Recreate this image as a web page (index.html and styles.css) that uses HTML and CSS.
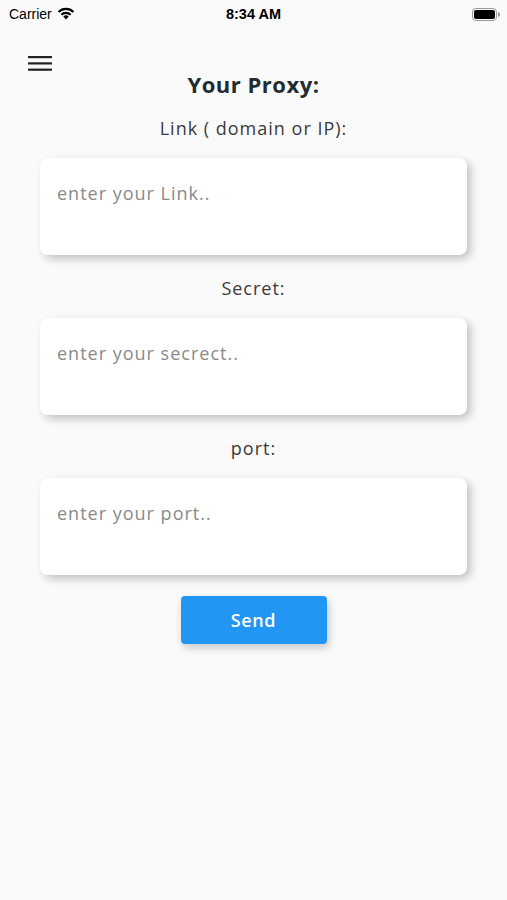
FILE: index.html
```html
<!DOCTYPE html>
<html>
<head>
<meta charset="utf-8">
<link rel="stylesheet" href="styles.css">
</head>
<body>
<div class="screen">
  <div class="statusbar">
    <div class="sb-left">
      <span class="carrier">Carrier</span>
      <svg class="wifi" width="18" height="13" viewBox="0 0 18 13">
        <path d="M9 12.5 L6.3 9.6 A3.9 3.9 0 0 1 11.7 9.6 Z" fill="#000"/>
        <path d="M3.6 7 A7.6 7.6 0 0 1 14.4 7 L12.9 8.5 A5.5 5.5 0 0 0 5.1 8.5 Z" fill="#000"/>
        <path d="M0.8 4.2 A11.6 11.6 0 0 1 17.2 4.2 L15.7 5.7 A9.5 9.5 0 0 0 2.3 5.7 Z" fill="#000"/>
      </svg>
    </div>
    <div class="time">8:34 AM</div>
    <div class="sb-right">
      <svg width="28" height="13" viewBox="0 0 28 13">
        <rect x="0.5" y="0.5" width="24" height="12" rx="3.5" fill="none" stroke="#9a9a9a"/>
        <rect x="2" y="2" width="21" height="9" rx="2" fill="#000"/>
        <path d="M26 4.3 A2 2 0 0 1 26 8.7 Z" fill="#9a9a9a"/>
      </svg>
    </div>
  </div>
  <div class="topbar">
    <svg class="menu" width="24" height="18" viewBox="0 0 24 18">
      <rect x="0" y="1" width="24" height="2.2" fill="#222"/>
      <rect x="0" y="7.3" width="24" height="2.2" fill="#222"/>
      <rect x="0" y="13.6" width="24" height="2.2" fill="#222"/>
    </svg>
  </div>
  <main class="content">
    <h1 class="title">Your Proxy:</h1>
    <label class="label">Link ( domain or IP):</label>
    <div class="field"><span class="placeholder">enter your Link..</span></div>
    <label class="label">Secret:</label>
    <div class="field"><span class="placeholder">enter your secrect..</span></div>
    <label class="label">port:</label>
    <div class="field"><span class="placeholder">enter your port..</span></div>
    <button class="send">Send</button>
  </main>
</div>
</body>
</html>
```
FILE: styles.css
```css
* { box-sizing: border-box; }
html, body { margin: 0; padding: 0; }
body {
  width: 507px;
  height: 900px;
  background: #fafafa;
  font-family: "Open Sans", "Noto Sans", sans-serif;
  color: #333;
  overflow: hidden;
}
.screen { width: 507px; height: 900px; }
.statusbar {
  height: 28px;
  display: flex;
  align-items: center;
  justify-content: space-between;
  padding: 0 7px 0 9px;
  position: relative;
}
.sb-left { display: flex; align-items: center; gap: 5px; }
.carrier {
  font-family: "Liberation Sans", Arial, sans-serif;
  font-size: 14px;
  color: #000;
}
.wifi { margin-top: -2px; }
.time {
  position: absolute;
  left: 0; right: 0;
  text-align: center;
  font-family: "Liberation Sans", Arial, sans-serif;
  font-weight: bold;
  font-size: 14.5px;
  color: #000;
  pointer-events: none;
}
.sb-right { display: flex; align-items: center; }
.topbar {
  height: 44px;
  padding: 27px 0 0 28px;
}
.menu { display: block; }
.content {
  display: flex;
  flex-direction: column;
  align-items: center;
  margin-top: -2px;
}
.title {
  margin: 0;
  font-size: 22px;
  font-weight: 700;
  letter-spacing: 0.5px;
  color: #1f2d33;
  line-height: 28px;
}
.label {
  font-size: 18px;
  letter-spacing: 1px;
  line-height: 24px;
  color: #3a3a3a;
  margin-top: 21px;
  margin-bottom: 18px;
}
.title + .label { margin-top: 18px; }
.field {
  width: 427px;
  height: 97px;
  background: #fff;
  border-radius: 8px;
  box-shadow: 4px 4px 8px rgba(0,0,0,0.22);
  padding: 23px 17px;
  align-self: flex-start;
  margin-left: 40px;
}
.placeholder {
  font-size: 18px;
  letter-spacing: 1px;
  line-height: 24px;
  color: #8a8a8a;
  display: block;
}
.send {
  margin-top: 21px;
  width: 146px;
  height: 48px;
  background: #2196f3;
  color: #fff;
  border: none;
  border-radius: 4px;
  font-family: "Open Sans", "Noto Sans", sans-serif;
  font-size: 18px;
  font-weight: 600;
  letter-spacing: 0.6px;
  box-shadow: 2px 4px 8px rgba(0,0,0,0.2);
}
```
